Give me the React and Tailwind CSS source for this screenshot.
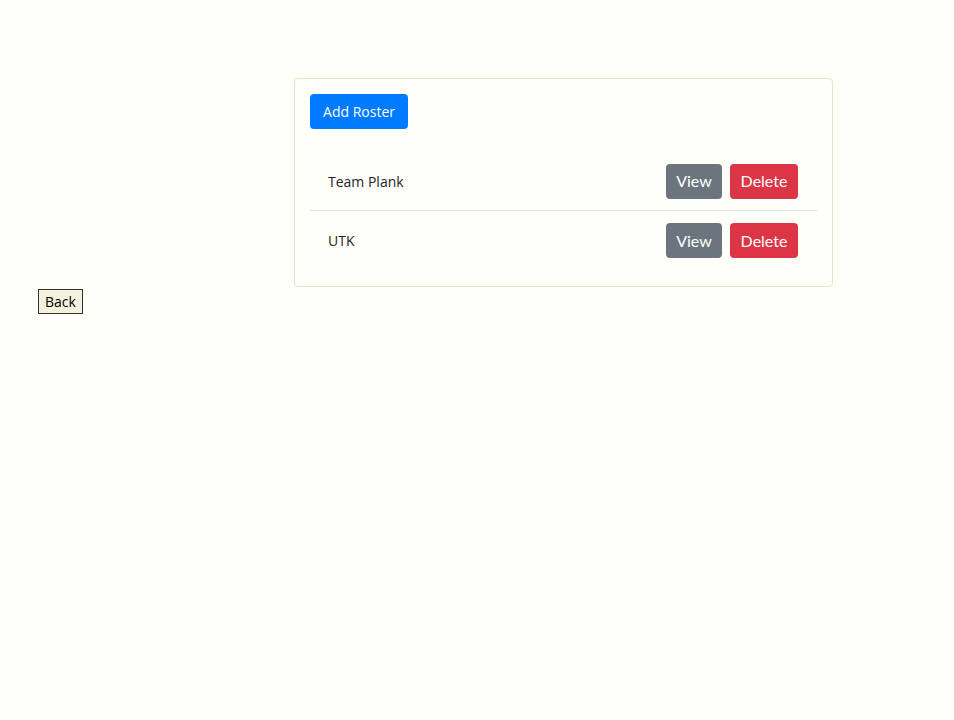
import React from 'react';

const rosters = ['Team Plank', 'UTK'];

const App = () => {
  return (
    <div className="min-h-[720px] bg-[#fffffa] pt-[78px] font-['Open_Sans',sans-serif] text-[#212529]">
      <div className="ml-[294px] w-[539px] h-[209px] rounded border border-[#e6e3cf] p-[15px]">
        <button className="h-[35px] w-[98px] rounded bg-[#007bff] text-white text-[14px]">Add Roster</button>
        <ul className="mt-[23px]">
          {rosters.map((name, i) => (
            <li
              key={name}
              className={`flex items-center justify-between h-[59px] pl-[18px] pr-[19px] ${i === 0 ? 'border-b border-[#e2e2dc]' : ''}`}
            >
              <span className="text-[14px]">{name}</span>
              <div className="flex gap-[8px] font-['Lato',sans-serif] text-[16px]">
                <button className="h-[35px] w-[56px] rounded bg-[#6c757d] text-white">View</button>
                <button className="h-[35px] w-[68px] rounded bg-[#dc3545] text-white">Delete</button>
              </div>
            </li>
          ))}
        </ul>
      </div>
      <button className="ml-[38px] mt-[2px] h-[25px] px-[6px] border border-[#333] bg-[#f4f2dc] text-[14px] text-black">Back</button>
    </div>
  );
};

export default App;
